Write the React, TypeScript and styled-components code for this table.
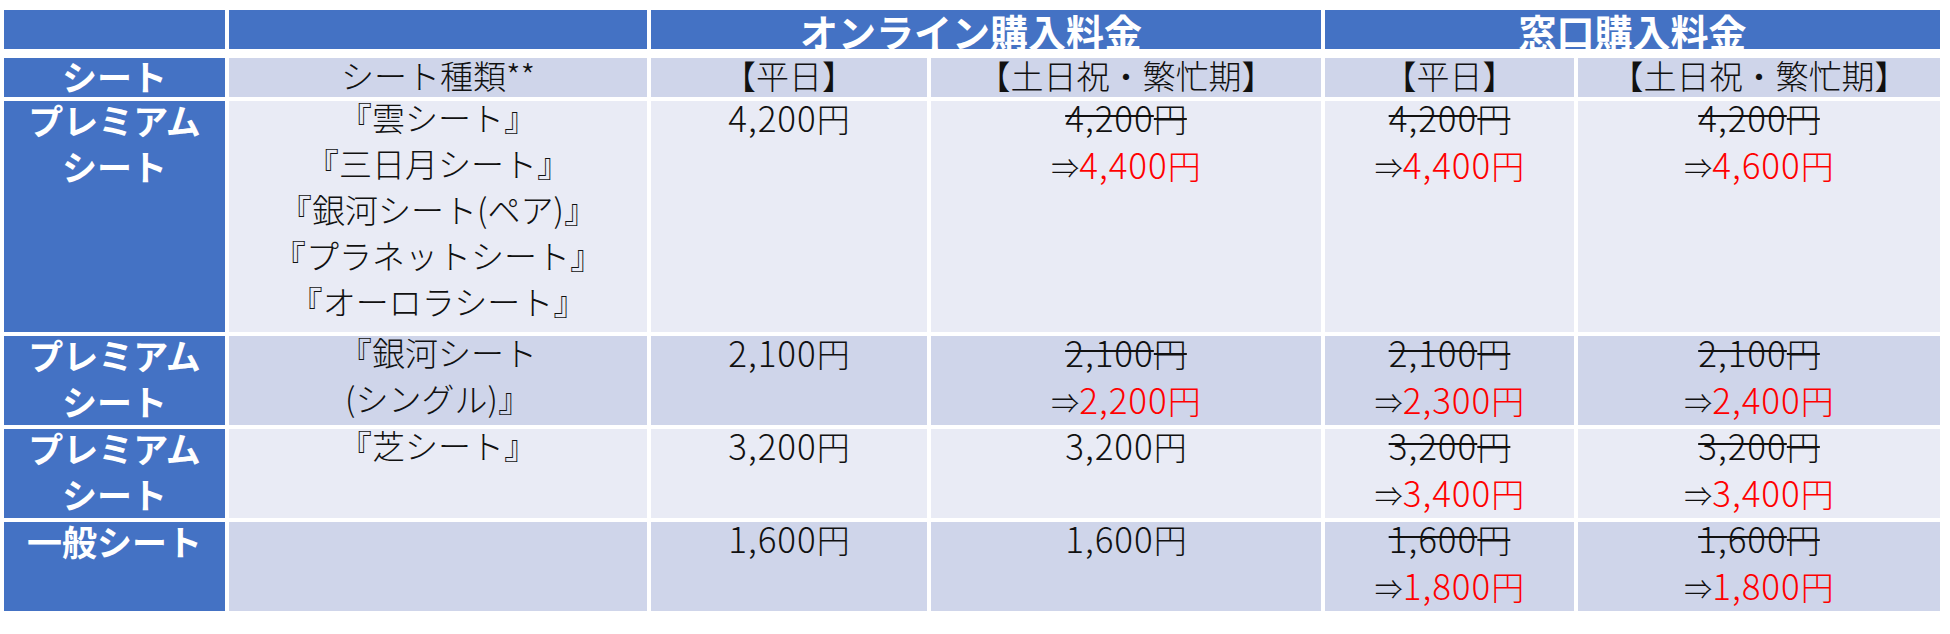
import * as React from "react";
import styled, { createGlobalStyle } from "styled-components";

const GlobalStyle = createGlobalStyle`
  body {
    margin: 0;
    background: #ffffff;
    font-family: "Noto Sans CJK JP", "Noto Sans", sans-serif;
  }
`;

// shared column template for the band and the body
const COLS = "221px 418px 276px 390px 249px 362px";

type Tone = "dark" | "light";

const tones: Record<Tone, string> = {
  dark: "#cfd5ea",
  light: "#e9ebf5",
};

// Page wrapper
const Sheet = styled.div`
  display: flex;
  flex-direction: column;
  gap: 11px;
  padding: 10px 0 0 4px;
`;

// Top blue band with merged group titles
const Band = styled.div`
  display: grid;
  grid-template-columns: ${COLS};
  column-gap: 4px;
  height: 37px;
`;

const BandCell = styled.div<{ $span?: number; $nudge?: number }>`
  grid-column: span ${(p) => p.$span ?? 1};
  background: #4472c4;
  color: #ffffff;
  font-weight: 700;
  font-size: 38px;
  line-height: 37px;
  padding-top: 2px;
  padding-right: ${(p) => p.$nudge ?? 0}px;
  box-sizing: border-box;
  text-align: center;
  white-space: nowrap;
`;

// Body grid
const Grid = styled.div`
  display: grid;
  grid-template-columns: ${COLS};
  grid-template-rows: 39px 231px 89px 89px 89px;
  gap: 4px;
`;

const Cell = styled.div<{ $tone: Tone; $head?: boolean }>`
  background: ${(p) => tones[p.$tone]};
  color: #111111;
  font-size: 33px;
  font-weight: 300;
  line-height: ${(p) => (p.$head ? "39px" : "46px")};
  text-align: center;
  white-space: nowrap;
`;

const SideCell = styled.div<{ $head?: boolean }>`
  background: #4472c4;
  color: #ffffff;
  font-size: 35px;
  font-weight: 700;
  line-height: ${(p) => (p.$head ? "39px" : "46px")};
  text-align: center;
  white-space: nowrap;
`;

const Lines = styled.div<{ $shift: number }>`
  display: flex;
  flex-direction: column;
  align-items: center;
  margin-top: ${(p) => p.$shift}px;
`;

const Line = styled.div`
  display: block;
`;

const Num = styled.span`
  font-size: 35px;
  letter-spacing: 1px;
`;

const Old = styled.span`
  text-decoration: line-through;
  text-decoration-thickness: 2px;
  text-decoration-color: #111111;
`;

const Arrow = styled.span`
  color: #111111;
  font-size: 28px;
`;

const New = styled.span`
  color: #ff0000;
`;

type Price = { base: string } | { old: string; now: string };

type Row = {
  tone: Tone;
  side: string[];
  kinds: string[];
  prices: Price[];
};

const rows: Row[] = [
  {
    tone: "light",
    side: ["プレミアム", "シート"],
    kinds: [
      "『雲シート』",
      "『三日月シート』",
      "『銀河シート(ペア)』",
      "『プラネットシート』",
      "『オーロラシート』",
    ],
    prices: [
      { base: "4,200" },
      { old: "4,200", now: "4,400" },
      { old: "4,200", now: "4,400" },
      { old: "4,200", now: "4,600" },
    ],
  },
  {
    tone: "dark",
    side: ["プレミアム", "シート"],
    kinds: ["『銀河シート", "(シングル)』"],
    prices: [
      { base: "2,100" },
      { old: "2,100", now: "2,200" },
      { old: "2,100", now: "2,300" },
      { old: "2,100", now: "2,400" },
    ],
  },
  {
    tone: "light",
    side: ["プレミアム", "シート"],
    kinds: ["『芝シート』"],
    prices: [
      { base: "3,200" },
      { base: "3,200" },
      { old: "3,200", now: "3,400" },
      { old: "3,200", now: "3,400" },
    ],
  },
  {
    tone: "dark",
    side: ["一般シート"],
    kinds: [],
    prices: [
      { base: "1,600" },
      { base: "1,600" },
      { old: "1,600", now: "1,800" },
      { old: "1,600", now: "1,800" },
    ],
  },
];

const heads = ["【平日】", "【土日祝・繁忙期】", "【平日】", "【土日祝・繁忙期】"];

function PriceCell({ price, tone }: { price: Price; tone: Tone }) {
  return (
    <Cell $tone={tone}>
      <Lines $shift={-7}>
        {"base" in price ? (
          <Line>
            <Num>{price.base}</Num>円
          </Line>
        ) : (
          <>
            <Line>
              <Old>
                <Num>{price.old}</Num>円
              </Old>
            </Line>
            <Line>
              <Arrow>⇒</Arrow>
              <New>
                <Num>{price.now}</Num>円
              </New>
            </Line>
          </>
        )}
      </Lines>
    </Cell>
  );
}

export default function App() {
  return (
    <>
      <GlobalStyle />
      <Sheet>
        <Band>
          <BandCell />
          <BandCell />
          <BandCell $span={2} $nudge={30}>
            オンライン購入料金
          </BandCell>
          <BandCell $span={2}>窓口購入料金</BandCell>
        </Band>
        <Grid>
          <SideCell $head>
            <Lines $shift={-2}>シート</Lines>
          </SideCell>
          <Cell $tone="dark" $head>
            <Lines $shift={-2}>シート種類**</Lines>
          </Cell>
          {heads.map((h, i) => (
            <Cell key={i} $tone="dark" $head>
              <Lines $shift={-2}>{h}</Lines>
            </Cell>
          ))}
          {rows.map((row, r) => (
            <React.Fragment key={r}>
              <SideCell>
                <Lines $shift={-4}>
                  {row.side.map((s) => (
                    <Line key={s}>{s}</Line>
                  ))}
                </Lines>
              </SideCell>
              <Cell $tone={row.tone}>
                <Lines $shift={-7}>
                  {row.kinds.map((k) => (
                    <Line key={k}>{k}</Line>
                  ))}
                </Lines>
              </Cell>
              {row.prices.map((p, i) => (
                <PriceCell key={i} price={p} tone={row.tone} />
              ))}
            </React.Fragment>
          ))}
        </Grid>
      </Sheet>
    </>
  );
}
